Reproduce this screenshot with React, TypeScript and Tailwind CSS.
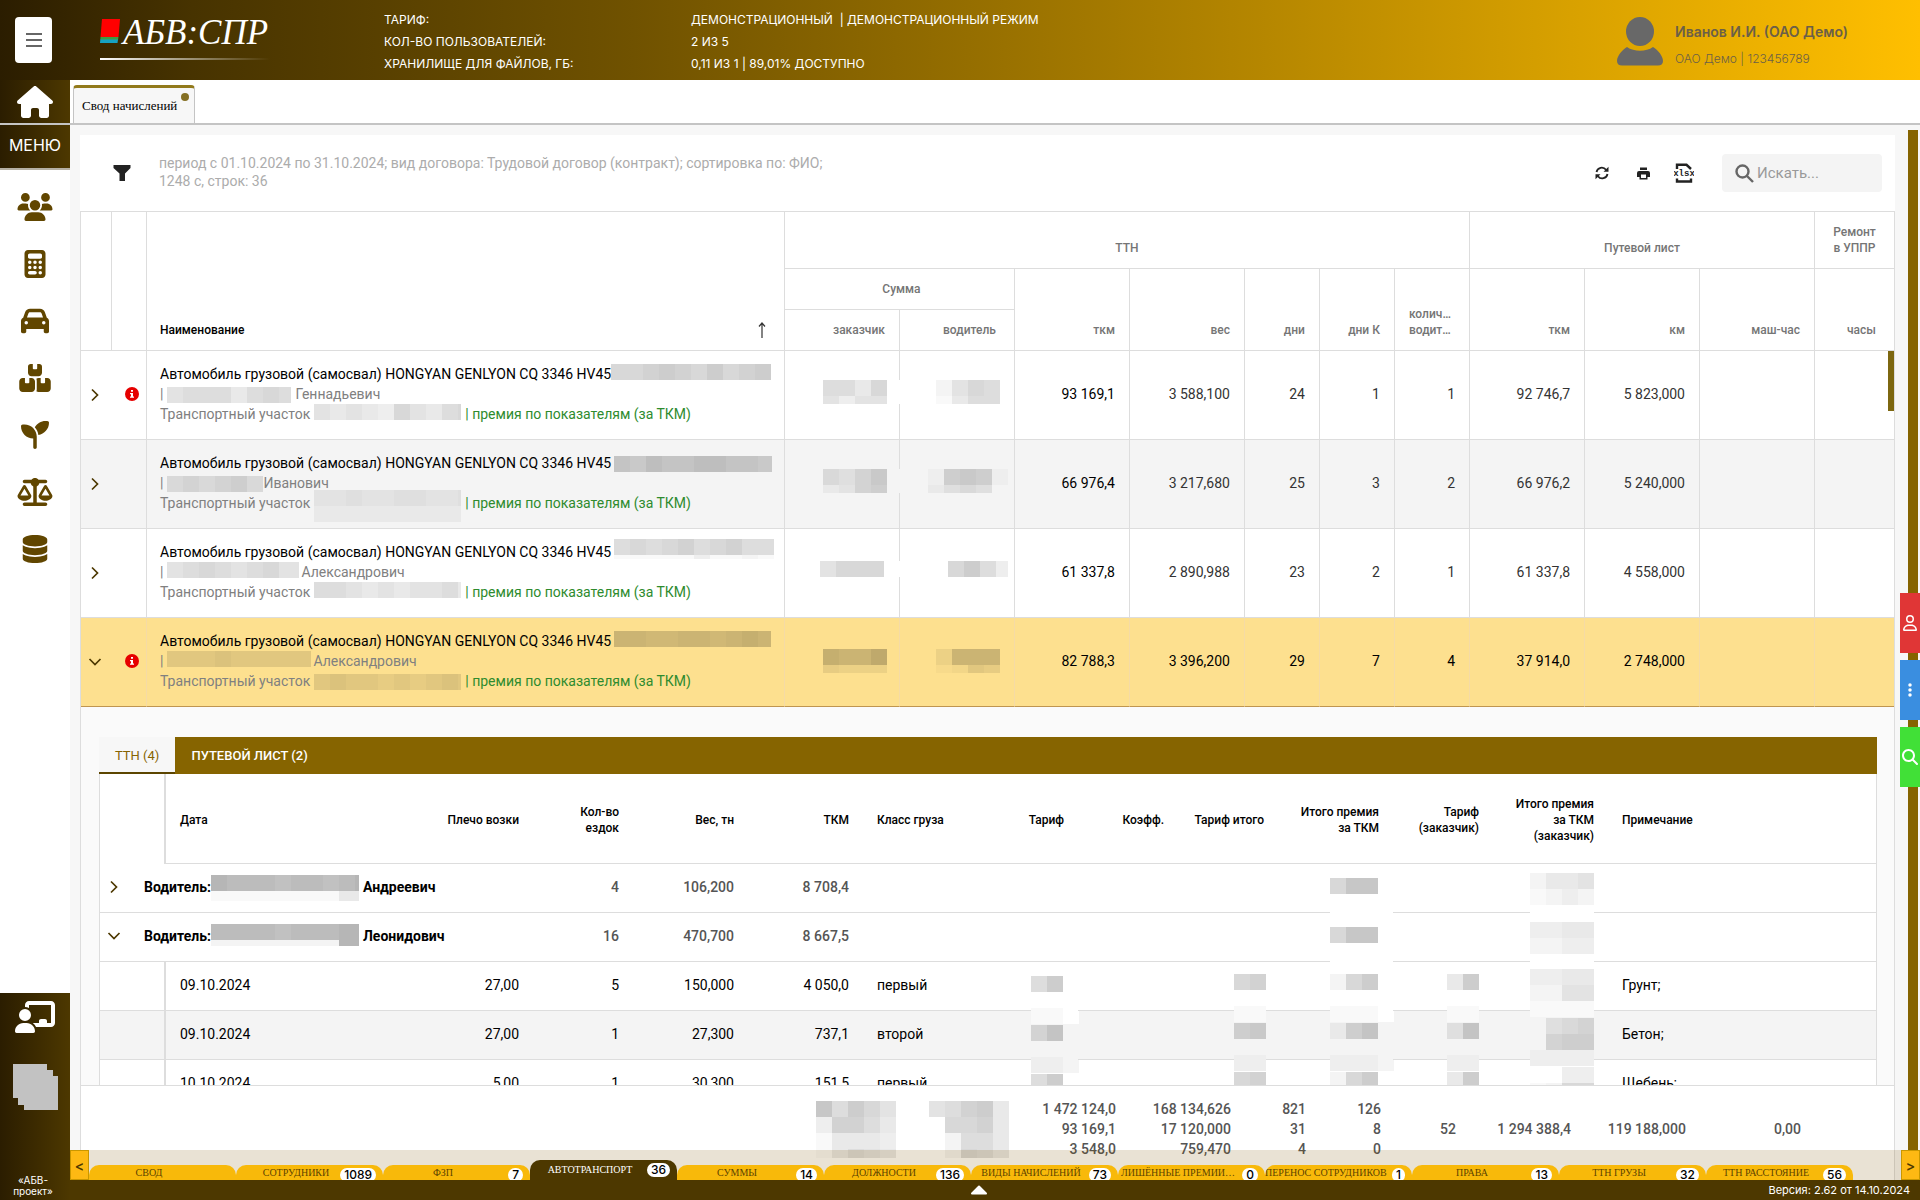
import type { ReactNode } from "react";
import {
  FaBoxesStacked,
  FaCalculator,
  FaCar,
  FaChalkboardUser,
  FaDatabase,
  FaEllipsisVertical,
  FaHouse,
  FaMagnifyingGlass,
  FaRegUser,
  FaScaleBalanced,
  FaSeedling,
  FaUsers,
} from "react-icons/fa6";

const CELL = 16;

// Hides private data: every hex digit is one square, the higher the darker, "." stays empty
function Mosaic({ rows, width, height, className = "" }: { rows: string[]; width?: number; height?: number; className?: string }) {
  const w = width || rows[0].length * CELL;
  const h = height || rows.length * CELL;
  return (
    <svg width={w} height={h} className={`shrink-0 ${className}`} aria-hidden="true">
      {rows.map((row, y) =>
        row.split("").map((c, x) =>
          c === "." ? null : (
            <g key={`${x}-${y}`}>
              <rect x={x * CELL} y={y * CELL} width={CELL} height={CELL} fill="currentColor" />
              <rect x={x * CELL} y={y * CELL} width={CELL} height={CELL} fill="#000" opacity={parseInt(c, 16) * 0.022} />
            </g>
          )
        )
      )}
    </svg>
  );
}

function Chevron({ open }: { open?: boolean }) {
  return (
    <svg
      viewBox="0 0 14 14"
      className={open ? "w-[14px] h-[14px] rotate-90" : "w-[14px] h-[14px]"}
      fill="none"
      stroke="#4d3800"
      strokeWidth="1.7"
    >
      <path d="M4 1.5 L9.5 7 L4 12.5" />
    </svg>
  );
}

const menu = [
  { label: "Сотрудники", icon: FaUsers },
  { label: "Расчёт", icon: FaCalculator },
  { label: "Автотранспорт", icon: FaCar },
  { label: "Склад", icon: FaBoxesStacked },
  { label: "Растениеводство", icon: FaSeedling },
  { label: "Баланс", icon: FaScaleBalanced },
  { label: "Справочники", icon: FaDatabase },
];

interface CarRow {
  info?: boolean;
  open?: boolean;
  gray?: boolean;
  plate: ReactNode;
  owner: ReactNode;
  patronymic: string;
  place: ReactNode;
  sum: ReactNode;
  driver: ReactNode;
  values: string[];
}

const cars: CarRow[] = [
  {
    info: true,
    plate: <Mosaic rows={["7789879789"]} width={160} />,
    owner: <Mosaic rows={["56664676"]} width={124} className="ml-1 mr-1 mt-[3px]" />,
    patronymic: "Геннадьевич",
    place: <Mosaic rows={["5454375467"]} width={147} className="ml-1" />,
    sum: <Mosaic rows={["66470", "53550"]} height={24} className="-mr-4" />,
    driver: <Mosaic rows={["2576", "1466"]} height={24} />,
    values: ["93 169,1", "3 588,100", "24", "1", "1", "92 746,7", "5 823,000", "", ""],
  },
  {
    gray: true,
    plate: <Mosaic rows={["98a99aa998"]} width={158} className="ml-[3px] mt-[3px]" />,
    owner: <Mosaic rows={["565675"]} width={96} className="ml-1 mt-[3px]" />,
    patronymic: "Иванович",
    place: <Mosaic rows={["3343344334", "2222222222"]} width={147} className="ml-1 -mt-[3px]" />,
    sum: <Mosaic rows={["54680", "23670"]} height={24} className="-mr-4" />,
    driver: <Mosaic rows={["17871", "24540"]} height={24} className="-mr-2" />,
    values: ["66 976,4", "3 217,680", "25", "3", "2", "66 976,2", "5 240,000", "", ""],
  },
  {
    plate: <Mosaic rows={["6767867866", "1111131121"]} width={160} height={20} className="ml-[3px] -mt-[3px]" />,
    owner: <Mosaic rows={["567656755"]} width={132} className="ml-1 mr-[2px]" />,
    patronymic: "Александрович",
    place: <Mosaic rows={["6654545564"]} width={147} className="ml-1" />,
    sum: <Mosaic rows={["577700"]} width={80} className="mt-[3px] -mr-[13px]" />,
    driver: <Mosaic rows={["7963"]} width={60} className="mt-[3px] -mr-2" />,
    values: ["61 337,8", "2 890,988", "23", "2", "1", "61 337,8", "4 558,000", "", ""],
  },
  {
    info: true,
    open: true,
    plate: <Mosaic rows={["99889989a9"]} width={157} className="ml-[3px]" />,
    owner: <Mosaic rows={["555655555"]} width={144} className="ml-1 mr-[2px]" />,
    patronymic: "Александрович",
    place: <Mosaic rows={["5655454565"]} width={147} className="ml-1 mt-[3px]" />,
    sum: <Mosaic rows={["a99b", "4333"]} height={24} className="mt-[2px]" />,
    driver: <Mosaic rows={["3999", "1254"]} height={24} className="mt-[2px]" />,
    values: ["82 788,3", "3 396,200", "29", "7", "4", "37 914,0", "2 748,000", "", ""],
  },
];

const trips = [
  { date: "09.10.2024", arm: "27,00", count: "5", weight: "150,000", tkm: "4 050,0", cls: "первый", note: "Грунт;", total: ["3344", "2255", "1111"] },
  { date: "09.10.2024", arm: "27,00", count: "1", weight: "27,300", tkm: "737,1", cls: "второй", note: "Бетон;", total: ["0456", "0677", "1111"] },
  { date: "10.10.2024", arm: "5,00", count: "1", weight: "30,300", tkm: "151,5", cls: "первый", note: "Щебень;", total: ["0033", "1277"] },
];

const sheets = [
  { label: "СВОД" },
  { label: "СОТРУДНИКИ", count: 1089 },
  { label: "ФЗП", count: 7 },
  { label: "АВТОТРАНСПОРТ", count: 36, active: true },
  { label: "СУММЫ", count: 14 },
  { label: "ДОЛЖНОСТИ", count: 136 },
  { label: "ВИДЫ НАЧИСЛЕНИЙ", count: 73 },
  { label: "ЛИШЁННЫЕ ПРЕМИИ…", count: 0 },
  { label: "ПЕРЕНОС СОТРУДНИКОВ", count: 1 },
  { label: "ПРАВА", count: 13 },
  { label: "ТТН ГРУЗЫ", count: 32 },
  { label: "ТТН РАССТОЯНИЕ", count: 56 },
];

const totals = [
  ["1 472 124,0", "93 169,1", "3 548,0"],
  ["168 134,626", "17 120,000", "759,470"],
  ["821", "31", "4"],
  ["126", "8", "0"],
  ["52"],
  ["1 294 388,4"],
  ["119 188,000"],
  ["0,00"],
  [""],
];

function MainCols() {
  return (
    <colgroup>
      <col className="w-[31px]" />
      <col className="w-[35px]" />
      <col />
      <col className="w-[115px]" />
      <col className="w-[115px]" />
      <col className="w-[115px]" />
      <col className="w-[115px]" />
      <col className="w-[75px]" />
      <col className="w-[75px]" />
      <col className="w-[75px]" />
      <col className="w-[115px]" />
      <col className="w-[115px]" />
      <col className="w-[115px]" />
      <col className="w-[79px]" />
    </colgroup>
  );
}

function Header() {
  return (
    <header className="h-20 shrink-0 flex bg-[linear-gradient(to_right,#2b1d00,#473300_10%,#705200_33%,#b68700_66%,#ffbf00)] text-white">
      <button aria-label="Меню" className="ml-[15px] mt-[17px] w-[37px] h-[46px] rounded bg-white flex flex-col items-center justify-center gap-1">
        <span className="w-4 h-[2px] bg-[#666]" />
        <span className="w-4 h-[2px] bg-[#666]" />
        <span className="w-4 h-[2px] bg-[#666]" />
      </button>

      {/* Logo */}
      <a href="#" className="ml-12 mt-[13px] w-[284px]">
        <div className="flex items-center h-10">
          <svg viewBox="0 0 20 24" className="w-5 h-6 -mt-1">
            <path d="M2 0 H20 L18.5 18 H0.5 Z" fill="#ff0000" />
            <path d="M0.5 18 H18.5 L18 21 H0.3 Z" fill="#3f9b3f" />
            <path d="M0.3 20.5 H18 L17.5 24 H0 Z" fill="#16a3c4" />
          </svg>
          <span className="ml-[3px] font-['Liberation_Serif',serif] italic text-[35px] leading-10">АБВ:СПР</span>
        </div>
        <div className="mt-[5px] w-[170px] h-[2px] bg-gradient-to-r from-white to-transparent" />
      </a>

      {/* Tariff */}
      <dl className="mt-[9px] grid grid-cols-[307px_auto] auto-rows-[22px] content-start text-[12px] leading-[22px]">
        <dt>ТАРИФ:</dt>
        <dd>ДЕМОНСТРАЦИОННЫЙ &nbsp;| ДЕМОНСТРАЦИОННЫЙ РЕЖИМ</dd>
        <dt>КОЛ-ВО ПОЛЬЗОВАТЕЛЕЙ:</dt>
        <dd>2 ИЗ 5</dd>
        <dt>ХРАНИЛИЩЕ ДЛЯ ФАЙЛОВ, ГБ:</dt>
        <dd>0,11 ИЗ 1 | 89,01% ДОСТУПНО</dd>
      </dl>

      {/* User */}
      <div className="ml-auto w-[303px] flex text-[#6b5f48]">
        <svg viewBox="0 0 46 49" className="mt-[17px] w-[46px] h-[49px]" fill="#686868">
          <ellipse cx="23" cy="14.5" rx="14" ry="14.5" />
          <path d="M10 30 C17 35 29 35 36 30 C41 33 46 39 46 44 C46 47 44 48.500 41 48.500 H5 C2 48.500 0 47 0 44 C0 39 5 33 10 30 Z" />
        </svg>
        <div className="ml-3">
          <div className="mt-5 text-[14px] leading-6 font-semibold">Иванов И.И. (ОАО Демо)</div>
          <div className="mt-1 text-[12px] leading-[22px] font-light">ОАО Демо | 123456789</div>
        </div>
      </div>
    </header>
  );
}

function Sidebar() {
  return (
    <aside className="w-[70px] shrink-0 flex flex-col bg-white text-white">
      <a href="#" aria-label="Домой" className="h-[45px] border-b-2 border-[#c4c4c4] bg-gradient-to-r from-[#2b1d00] to-[#4d3800] flex items-center justify-center">
        <FaHouse className="w-9 h-8" />
      </a>
      <div className="h-[45px] border-b-2 border-[#b5b0a4] bg-gradient-to-r from-[#2b1d00] to-[#4d3800] text-[16px] leading-10 text-center">
        МЕНЮ
      </div>
      <nav className="pt-2 flex flex-col">
        {menu.map(({ label, icon: Icon }) => (
          <a key={label} href="#" aria-label={label} className="h-[57px] flex items-center justify-center text-[#614600]">
            <Icon className="w-9 h-7" />
          </a>
        ))}
      </nav>
      <div className="mt-auto h-[207px] bg-gradient-to-r from-[#2b1d00] to-[#4d3800] flex flex-col items-center pt-2">
        <FaChalkboardUser className="w-10 h-8" />
        <svg viewBox="0 0 45 46" className="mt-[31px] w-[45px] h-[46px]" fill="#c2c2c2">
          <rect width="34" height="34" />
          <rect x="5" y="6" width="35" height="35" />
          <rect x="11" y="12" width="34" height="34" />
        </svg>
        <div className="mt-auto mb-[3px] w-[66px] pr-1 text-[10px] leading-[11px] text-center">
          «АБВ-
          <br />
          проект»
        </div>
      </div>
    </aside>
  );
}

function Toolbar() {
  return (
    <div className="h-[76px] shrink-0 flex items-center bg-white pr-[13px] font-[Roboto,sans-serif]">
      <button aria-label="Фильтр" className="ml-[33px] w-[18px]">
        <svg viewBox="0 0 18 16" className="w-[18px] h-4" fill="#222">
          <path d="M0.500 0 H17.500 V3 L12 8.500 V16 H6.500 V8.500 L0.500 3 Z" />
        </svg>
      </button>
      <p className="ml-7 pb-[2px] text-[14px] leading-[18px] text-[#acacac]">
        период с 01.10.2024 по 31.10.2024; вид договора: Трудовой договор (контракт); сортировка по: ФИО;
        <br />
        1248 с, строк: 36
      </p>
      <div className="ml-auto flex items-center">
        <button aria-label="Обновить">
          <svg viewBox="0 0 14 14" className="w-[14px] h-[14px]" fill="none" stroke="#222" strokeWidth="1.8">
            <path d="M1.500 6 A5.300 5.300 0 0 1 11 3.800" />
            <path d="M12.500 8 A5.300 5.300 0 0 1 3 10.200" />
            <path d="M13.500 0.800 V5.800 H8.500 Z M0.500 13.200 V8.200 H5.500 Z" fill="#222" stroke="none" />
          </svg>
        </button>
        <button aria-label="Печать" className="ml-7">
          <svg viewBox="0 0 13 13" className="w-[13px] h-[13px]" fill="#222">
            <path d="M3 0.500 H10 V3 H3 Z M2 4 H11 A2 2 0 0 1 13 6 V10 H10.500 V12.500 H2.500 V10 H0 V6 A2 2 0 0 1 2 4 Z M4 7.500 V11 H9 V7.500 Z" fillRule="evenodd" />
          </svg>
        </button>
        <button aria-label="Экспорт в xlsx" className="ml-6">
          <svg viewBox="0 0 20 20" className="w-5 h-5" fill="none" stroke="#222" strokeWidth="2.400">
            <path d="M3 6 V1.800 H12.500 L17 6 M3 15.500 V18.500 H17 V15.500" />
            <text x="10" y="13" textAnchor="middle" fontSize="9" fontWeight="700" fontFamily="Liberation Mono, monospace" fill="#222" stroke="none">xlsx</text>
          </svg>
        </button>
        <label className="ml-7 w-[160px] h-[38px] rounded-sm bg-[#f4f4f4] flex items-center pl-[13px]">
          <svg viewBox="0 0 19 19" className="w-[19px] h-[19px] shrink-0" fill="none" stroke="#666" strokeWidth="2.400">
            <circle cx="7.500" cy="7.500" r="6" />
            <path d="M12 12 L18 18" />
          </svg>
          <input
            type="text"
            aria-label="Поиск"
            placeholder="Искать..."
            className="ml-[3px] w-28 bg-transparent outline-none text-[15px] leading-5 placeholder:text-[#999]"
          />
        </label>
      </div>
    </div>
  );
}

const th = "border-r border-b border-[#ddd] px-[14px] pb-3 align-bottom text-right font-medium last:border-r-0";

function MainHead() {
  return (
    <thead className="text-[12px] leading-4 text-[#757575]">
      <tr className="h-[57px]">
        <th rowSpan={3} className={th} />
        <th rowSpan={3} className={th} />
        <th rowSpan={3} className="border-r border-b border-[#ddd] pl-[13px] pr-[18px] pb-3 align-bottom font-medium">
          <div className="flex justify-between items-end text-black">
            <span>Наименование</span>
            <svg viewBox="0 0 8 16" className="w-2 h-4" fill="none" stroke="#333" strokeWidth="1.2">
              <path d="M4 16 V1 M1 4.500 L4 1 L7 4.500" />
            </svg>
          </div>
        </th>
        <th colSpan={7} className="border-r border-b border-[#ddd] pb-3 align-bottom font-medium">ТТН</th>
        <th colSpan={3} className="border-r border-b border-[#ddd] pb-3 align-bottom font-medium">Путевой лист</th>
        <th className="border-b border-[#ddd] pb-3 align-bottom font-medium">
          Ремонт
          <br />в УППР
        </th>
      </tr>
      <tr className="h-[41px]">
        <th colSpan={2} className="border-r border-b border-[#ddd] pl-1 pb-3 align-bottom font-medium">Сумма</th>
        <th rowSpan={2} className={th}>ткм</th>
        <th rowSpan={2} className={th}>вес</th>
        <th rowSpan={2} className={th}>дни</th>
        <th rowSpan={2} className={th}>дни К</th>
        <th rowSpan={2} className="border-r border-b border-[#ddd] pl-[14px] pb-3 align-bottom text-left font-medium">
          колич…
          <br />
          водит…
        </th>
        <th rowSpan={2} className={th}>ткм</th>
        <th rowSpan={2} className={th}>км</th>
        <th rowSpan={2} className={th}>маш-час</th>
        <th rowSpan={2} className="border-b border-[#ddd] pr-[18px] pb-3 align-bottom text-right font-medium">часы</th>
      </tr>
      <tr className="h-[41px]">
        <th className={th}>заказчик</th>
        <th className="border-r border-b border-[#ddd] pr-[18px] pb-3 align-bottom text-right font-medium">водитель</th>
      </tr>
    </thead>
  );
}

function Car({ car }: { car: CarRow }) {
  const line = car.open ? "border-r-[#f5dba5] border-b-[#bf9550]" : "border-[#ddd]";
  const row = car.open ? "bg-[#fde08f] text-[#fde08f]" : car.gray ? "bg-[#f4f4f4] text-[#f4f4f4]" : "bg-white text-white";
  const td = `border-r border-b ${line} last:border-r-0`;
  return (
    <tr className={`h-[89px] ${row}`}>
      <td className={`border-b ${line}`}>
        <button aria-label="Развернуть" className="ml-[7px] flex">
          <Chevron open={car.open} />
        </button>
      </td>
      <td className={`${td} pl-[13px] pb-[2px]`}>
        {car.info && (
          <svg viewBox="0 0 14 14" className="w-[14px] h-[14px]">
            <circle cx="7" cy="7" r="7" fill="#e60000" />
            <path d="M6 3 H8 V4.700 H6 Z M5 6 H8 V9.500 H9 V10.700 H5 V9.500 H6 V7.200 H5 Z" fill="#fff" />
          </svg>
        )}
      </td>
      <td className={`${td} pl-[13px] pb-[2px] whitespace-nowrap overflow-hidden`}>
        <div className="flex h-5">
          <span className="text-black">Автомобиль грузовой (самосвал) HONGYAN GENLYON CQ 3346 HV45</span>
          {car.plate}
        </div>
        <div className="flex h-5">
          <span className="text-[#808080]">|</span>
          {car.owner}
          <span className="text-[#808080]">{car.patronymic}</span>
        </div>
        <div className="flex h-5">
          <span className="text-[#808080]">Транспортный участок</span>
          {car.place}
          <span className="ml-1 text-[#2e8b2e]">| премия по показателям (за ТКМ)</span>
        </div>
      </td>
      <td className={`${td} pr-3 pt-[29px] align-top`}>
        <div className="flex justify-end">{car.sum}</div>
      </td>
      <td className={`${td} pr-[14px] pt-[29px] align-top`}>
        <div className="flex justify-end">{car.driver}</div>
      </td>
      {car.values.map((value, i) => (
        <td key={i} className={`${td} pr-[14px] pb-[2px] text-right ${i === 0 || car.open ? "text-black" : "text-[#333]"}`}>
          {value}
        </td>
      ))}
    </tr>
  );
}

const innerTh = "border-b border-[#ddd] px-[14px] pt-[2px] text-right font-medium";
const innerThLeft = "border-b border-[#ddd] pl-[14px] pt-[2px] text-left font-medium";
const innerTd = "relative border-b border-[#ddd] px-[14px] pb-[2px] text-right";
const innerTdLeft = "border-b border-[#ddd] pl-[14px] pb-[2px] text-black";

function DriverRow({ name, open, mask, count, weight, tkm, total }: {
  name: string; open?: boolean; mask: ReactNode; count: string; weight: string; tkm: string; total: string[];
}) {
  return (
    <tr className="h-[49px] bg-white text-white">
      <td colSpan={3} className="border-b border-[#ddd] pb-[2px]">
        <div className="flex h-5 font-bold">
          <button aria-label="Развернуть" className="w-7 flex items-center justify-center">
            <Chevron open={open} />
          </button>
          <span className="ml-4 text-black">Водитель:</span>
          {mask}
          <span className="ml-1 text-black">{name}</span>
        </div>
      </td>
      <td className={`${innerTd} font-medium text-[#555]`}>{count}</td>
      <td className={`${innerTd} font-medium text-[#555]`}>{weight}</td>
      <td className={`${innerTd} font-medium text-[#555]`}>{tkm}</td>
      <td className={innerTd} />
      <td className={innerTd} />
      <td className={innerTd} />
      <td className={innerTd} />
      <td className={innerTd}>
        <Mosaic rows={["7aa0", "0000", "0000"]} className="absolute top-[14px] -right-px" />
      </td>
      <td className={innerTd} />
      <td className={innerTd}>
        <Mosaic rows={total} className="absolute top-[9px] right-[14px]" />
      </td>
      <td className={innerTd} />
    </tr>
  );
}

function Detail() {
  return (
    <div className="bg-[#fafafa] pt-[30px] pl-[18px] pr-[17px]">
      <div role="tablist" className="h-[37px] bg-[#866400] flex text-[13px]">
        <button role="tab" aria-selected="true" className="px-4 pt-[2px] bg-[#f7f7f7] text-[#866400] border-b-2 border-[#5c4500]">
          ТТН (4)
        </button>
        <button role="tab" aria-selected="false" className="px-4 text-white font-medium">
          ПУТЕВОЙ ЛИСТ (2)
        </button>
      </div>
      <div className="border-x border-[#ddd] bg-white">
        <table className="w-full table-fixed border-separate border-spacing-0">
          <colgroup>
            <col className="w-[66px]" />
            <col className="w-[252px]" />
            <col className="w-[115px]" />
            <col className="w-[100px]" />
            <col className="w-[115px]" />
            <col className="w-[115px]" />
            <col className="w-[100px]" />
            <col className="w-[115px]" />
            <col className="w-[100px]" />
            <col className="w-[100px]" />
            <col className="w-[115px]" />
            <col className="w-[100px]" />
            <col className="w-[115px]" />
            <col />
          </colgroup>
          <thead className="text-[12px] leading-4 text-black">
            <tr className="h-[90px]">
              <th className="border-r-2 border-[#ddd]" />
              <th className={innerThLeft}>Дата</th>
              <th className={innerTh}>Плечо возки</th>
              <th className={innerTh}>
                Кол-во
                <br />
                ездок
              </th>
              <th className={innerTh}>Вес, тн</th>
              <th className={innerTh}>ТКМ</th>
              <th className={innerThLeft}>Класс груза</th>
              <th className={innerTh}>Тариф</th>
              <th className={innerTh}>Коэфф.</th>
              <th className={innerTh}>Тариф итого</th>
              <th className={innerTh}>
                Итого премия
                <br />
                за ТКМ
              </th>
              <th className={innerTh}>
                Тариф
                <br />
                (заказчик)
              </th>
              <th className={innerTh}>
                Итого премия
                <br />
                за ТКМ
                <br />
                (заказчик)
              </th>
              <th className={innerThLeft}>Примечание</th>
            </tr>
          </thead>
          <tbody>
            <DriverRow
              name="Андреевич"
              mask={<Mosaic rows={["dcccbccbcd", "1111111144"]} width={148} height={26} className="-mt-[2px]" />}
              count="4"
              weight="106,200"
              tkm="8 708,4"
              total={["2445", "1232", "0000"]}
            />
            <DriverRow
              open
              name="Леонидович"
              mask={<Mosaic rows={["ccccbcccdd", "22222222dd"]} width={148} height={22} className="-mt-[2px]" />}
              count="16"
              weight="470,700"
              tkm="8 667,5"
              total={["3344", "2233", "0000"]}
            />
            {trips.map((trip, i) => (
              <tr key={i} className={`h-[49px] ${i === 1 ? "bg-[#f4f4f4] text-[#f4f4f4]" : "bg-white text-white"}`}>
                <td className="border-b border-r-2 border-[#ddd]" />
                <td className={innerTdLeft}>{trip.date}</td>
                <td className={`${innerTd} text-black`}>{trip.arm}</td>
                <td className={`${innerTd} text-black`}>{trip.count}</td>
                <td className={`${innerTd} text-black`}>{trip.weight}</td>
                <td className={`${innerTd} text-black`}>{trip.tkm}</td>
                <td className={innerTdLeft}>{trip.cls}</td>
                <td className={innerTd}>
                  <Mosaic rows={["690", "000", "110"]} className="absolute top-[14px] -right-px" />
                </td>
                <td className={innerTd} />
                <td className={innerTd}>
                  <Mosaic rows={["78", "00", "11"]} className="absolute top-3 right-3" />
                </td>
                <td className={innerTd}>
                  <Mosaic rows={["2790", "0000", "1110"]} className="absolute top-3 -right-px" />
                </td>
                <td className={innerTd}>
                  <Mosaic rows={["49", "00", "11"]} className="absolute top-3 right-[14px]" />
                </td>
                <td className={innerTd}>
                  <Mosaic rows={trip.total} className="absolute top-[7px] right-[14px]" />
                </td>
                <td className={innerTdLeft}>{trip.note}</td>
              </tr>
            ))}
          </tbody>
        </table>
      </div>
    </div>
  );
}

function Totals() {
  return (
    <table className="h-[95px] shrink-0 w-full table-fixed border-separate border-spacing-0 border-t border-[#ddd] bg-white font-medium text-[#555]">
      <MainCols />
      <tbody>
        <tr>
          <td />
          <td />
          <td />
          <td className="pt-[15px] pr-1 align-top text-white">
            <div className="flex justify-end">
              <Mosaic rows={["a6975", "38864", "14443", "14654"]} height={57} />
            </div>
          </td>
          <td className="pt-[15px] pr-[6px] align-top text-white">
            <div className="flex justify-end">
              <Mosaic rows={["56894", ".7784", ".2664", ".2764"]} height={57} />
            </div>
          </td>
          {totals.map((lines, i) => (
            <td key={i} className="pt-[13px] pr-[14px] align-top text-right">
              <div className="h-[60px] flex flex-col justify-center">
                {lines.map((line) => (
                  <span key={line}>{line}</span>
                ))}
              </div>
            </td>
          ))}
        </tr>
      </tbody>
    </table>
  );
}

function Sheets() {
  return (
    <div className="absolute inset-x-0 bottom-0 h-[30px] flex justify-between">
      <button aria-label="Назад" className="w-[19px] border border-[#c99700] bg-[#fdb913] text-[14px] font-semibold text-[#4d3800]">
        &lt;
      </button>
      <div role="tablist" className="flex-1 flex items-end bg-[#7a5500]/17 font-['Liberation_Serif',serif] text-[10px]">
        {sheets.map((sheet) => (
          <button
            key={sheet.label}
            role="tab"
            aria-selected={!!sheet.active}
            className={
              sheet.active
                ? "relative w-[147px] h-5 rounded-t-[10px] bg-[#4d3800] text-white overflow-hidden"
                : "relative w-[147px] h-[15px] rounded-t-[10px] bg-[#f8b90a] text-[#5c4300] overflow-hidden"
            }
          >
            <span className="block w-[120px] text-center whitespace-nowrap leading-4">{sheet.label}</span>
            {sheet.count !== undefined && (
              <span className="absolute top-[3px] right-[7px] rounded-lg bg-white px-1 font-[Inter,sans-serif] text-[12px] leading-[14px] font-medium text-black">
                {sheet.count}
              </span>
            )}
          </button>
        ))}
      </div>
      <button aria-label="Вперёд" className="w-[19px] border border-[#c99700] bg-[#fdb913] text-[14px] font-semibold text-[#4d3800]">
        &gt;
      </button>
    </div>
  );
}

export default function App() {
  return (
    <div className="h-screen flex flex-col overflow-hidden bg-white font-[Inter,sans-serif]">
      <Header />
      <div className="flex-1 min-h-0 flex">
        <Sidebar />
        <main className="flex-1 min-w-0 flex flex-col">
          {/* Open pages */}
          <div className="h-[45px] shrink-0 border-b-2 border-[#c4c4c4] flex items-end pl-[3px]">
            <button className="relative h-[38px] w-[122px] rounded-t border-x border-t-[3px] border-x-[#c4c4c4] border-t-[#927a1c] bg-[#f7f7f7] pl-2 text-left font-['Liberation_Serif',serif] text-[13px] text-black">
              Свод начислений
              <span className="absolute top-[5px] right-[5px] w-2 h-2 rounded-full bg-[#857024]" />
            </button>
          </div>

          <section className="relative flex-1 min-h-0 flex flex-col bg-[#f7f7f7] pt-[10px] pl-[10px] pr-[25px]">
            <Toolbar />
            <div className="relative flex-1 min-h-0 flex flex-col border-x border-t border-[#ddd] bg-white font-[Roboto,sans-serif] text-[14px] leading-5">
              <div className="flex-1 min-h-0 overflow-hidden">
                <table className="w-full table-fixed border-separate border-spacing-0">
                  <MainCols />
                  <MainHead />
                  <tbody>
                    {cars.map((car, i) => (
                      <Car key={i} car={car} />
                    ))}
                    <tr>
                      <td colSpan={14}>
                        <Detail />
                      </td>
                    </tr>
                  </tbody>
                </table>
              </div>
              <Totals />
              <div className="absolute top-[139px] right-0 w-[6px] h-[60px] bg-[#7d6710]" />
            </div>

            <div className="absolute top-[5px] bottom-[30px] right-[2px] w-[10px] bg-[#866400]" />
            <div className="absolute top-[468px] right-0 w-5 flex flex-col gap-[7px] text-white">
              <button aria-label="Профиль" className="h-[60px] bg-[#e03636] flex items-center justify-center">
                <FaRegUser className="w-[14px] h-4" />
              </button>
              <button aria-label="Ещё" className="h-[60px] bg-[#3a8ee0] flex items-center justify-center">
                <FaEllipsisVertical className="w-4 h-4" />
              </button>
              <button aria-label="Найти" className="h-[60px] bg-[#41e037] flex items-center justify-center">
                <FaMagnifyingGlass className="w-4 h-4" />
              </button>
            </div>
            <Sheets />
          </section>

          {/* Status bar */}
          <footer className="h-5 shrink-0 grid grid-cols-[1fr_auto_1fr] items-center bg-[#4d3800] pr-[10px] text-white">
            <span />
            <button aria-label="Показать панель" className="mr-[22px]">
              <svg viewBox="0 0 18 10" className="w-[18px] h-[10px]" fill="#fff" stroke="#fff" strokeWidth="2" strokeLinejoin="round">
                <path d="M9 1.500 L16 8.500 H2 Z" />
              </svg>
            </button>
            <span className="text-right text-[11px] leading-4">Версия: 2.62 от 14.10.2024</span>
          </footer>
        </main>
      </div>
    </div>
  );
}
